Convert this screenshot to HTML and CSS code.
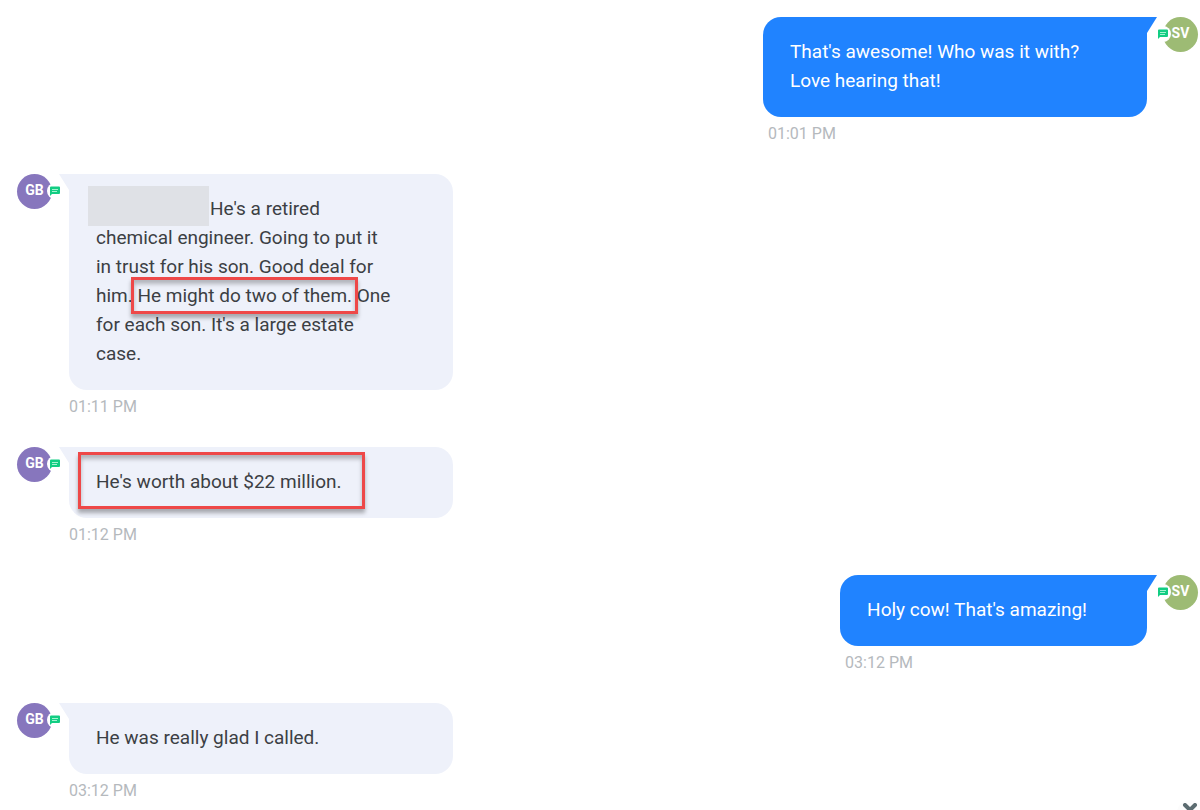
FILE: index.html
```html
<!DOCTYPE html>
<html lang="en">
<head>
    <meta charset="utf-8">
    <title>Conversation</title>
    <link rel="stylesheet" href="styles.css">
</head>
<body>
    <!-- chat icon shared by all avatars -->
    <svg class="sprite" aria-hidden="true">
        <symbol id="chat" viewBox="0 0 20 20">
            <path fill="#12cd83" d="M2 1h16a2 2 0 0 1 2 2v11a2 2 0 0 1-2 2H4l-4 4V3a2 2 0 0 1 2-2z"/>
            <path stroke="#a5f3d0" stroke-width="2" d="M4 7h12M4 11h10"/>
        </symbol>
    </svg>

    <main class="chat">
        <div class="message outgoing">
            <div class="content">
                <div class="bubble">That's awesome! Who was it with? Love hearing that!</div>
                <div class="time">01:01 PM</div>
            </div>
            <div class="avatar">SV<span class="badge"><svg><use href="#chat"/></svg></span></div>
        </div>

        <div class="message incoming">
            <div class="avatar">GB<span class="badge"><svg><use href="#chat"/></svg></span></div>
            <div class="content">
                <div class="bubble"><span class="redacted"></span>He's a retired chemical engineer. Going to put it in trust for his son. Good deal for him. <span class="highlight">He might do two of them.</span> One for each son. It's a large estate case.</div>
                <div class="time">01:11 PM</div>
            </div>
        </div>

        <div class="message incoming">
            <div class="avatar">GB<span class="badge"><svg><use href="#chat"/></svg></span></div>
            <div class="content">
                <div class="bubble"><span class="highlight large">He's worth about $22 million.</span></div>
                <div class="time">01:12 PM</div>
            </div>
        </div>

        <div class="message outgoing">
            <div class="content">
                <div class="bubble">Holy cow! That's amazing!</div>
                <div class="time">03:12 PM</div>
            </div>
            <div class="avatar">SV<span class="badge"><svg><use href="#chat"/></svg></span></div>
        </div>

        <div class="message incoming">
            <div class="avatar">GB<span class="badge"><svg><use href="#chat"/></svg></span></div>
            <div class="content">
                <div class="bubble">He was really glad I called.</div>
                <div class="time">03:12 PM</div>
            </div>
        </div>
    </main>

    <button class="scroll-down" type="button" aria-label="Scroll to latest">
        <svg viewBox="0 0 16 10"><path fill="none" stroke="#5b6b70" stroke-width="4" stroke-linecap="round" d="M3 2l5 5 5-5"/></svg>
    </button>
</body>
</html>
```
FILE: styles.css
```css
body {
    margin: 0;
    background-color: #fff;
    color: #3c3f44;
    font-family: Roboto, "Liberation Sans", sans-serif;
    font-size: 19px;
    line-height: 29px;
}
.sprite {
    position: absolute;
    width: 0;
    height: 0;
}
.chat {
    display: flex;
    flex-direction: column;
    gap: 30px;
    padding: 17px 2px 0 17px;
}
.message {
    display: flex;
    align-items: flex-start;
    gap: 17px;
}
.outgoing {
    justify-content: flex-end;
    gap: 16px;
}
.content {
    max-width: 384px;
}
.incoming .content {
    width: 384px;
}

/* Bubbles */
.bubble {
    position: relative;
    padding: 20px 60px 22px 27px;
    border-radius: 18px;
}
.incoming .bubble {
    background-color: #eef1fa;
    border-top-left-radius: 0;
}
.outgoing .bubble {
    background-color: #2083ff;
    color: #fff;
    border-top-right-radius: 0;
}
/* Pointed corner next to the avatar */
.bubble::before {
    content: "";
    position: absolute;
    top: 0;
    width: 10px;
    height: 16px;
    background-color: inherit;
}
.incoming .bubble::before {
    right: 100%;
    clip-path: polygon(0 0, 100% 0, 100% 100%);
}
.outgoing .bubble::before {
    left: 100%;
    clip-path: polygon(0 0, 100% 0, 0 100%);
}
.time {
    margin-top: 7px;
    color: #b5b9bd;
    font-size: 16px;
    line-height: 20px;
}
.outgoing .time {
    padding-left: 5px;
}

/* Avatars */
.avatar {
    position: relative;
    flex: none;
    width: 35px;
    height: 35px;
    border-radius: 50%;
    font-size: 14px;
    font-weight: bold;
    line-height: 33px;
    text-align: center;
    color: #fff;
}
.incoming .avatar {
    background-color: #8776bd;
}
.outgoing .avatar {
    background-color: #9dbb74;
}
.badge {
    position: absolute;
    top: 9px;
    display: flex;
    align-items: center;
    justify-content: center;
    width: 16px;
    height: 16px;
    border-radius: 50%;
    background-color: #fff;
}
.incoming .badge {
    left: 30px;
}
.outgoing .badge {
    right: 27px;
}
.badge svg {
    width: 10px;
    height: 10px;
}

/* Marked and hidden text */
.highlight {
    position: relative;
    white-space: nowrap;
}
.highlight::after {
    content: "";
    position: absolute;
    inset: -7px -6px;
    border: 3px solid #ee4848;
    box-shadow: 0 4px 4px rgba(0, 0, 0, 0.3), inset 0 4px 4px rgba(0, 0, 0, 0.25);
}
.highlight.large::after {
    inset: -18px -24px -16px -18px;
}
.redacted {
    display: inline-block;
    width: 121px;
    height: 40px;
    margin: -8px 1px -3px -8px;
    vertical-align: top;
    background-color: #dfe1e6;
}

.scroll-down {
    position: fixed;
    right: -3px;
    bottom: -16px;
    display: flex;
    justify-content: center;
    width: 26px;
    height: 26px;
    padding: 3px 0 0;
    border: none;
    border-radius: 50%;
    background-color: #fcfcfc;
    cursor: pointer;
}
.scroll-down svg {
    width: 16px;
    height: 10px;
}
```
